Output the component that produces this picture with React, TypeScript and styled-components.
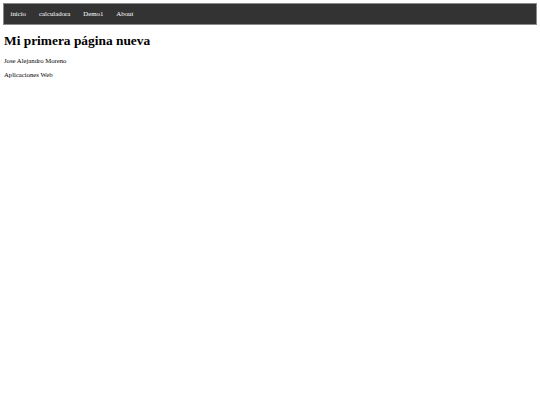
import React from "react";
import styled, { createGlobalStyle } from "styled-components";

const GlobalStyle = createGlobalStyle`
  html, body {
    margin: 0;
    background: #ffffff;
  }
  body {
    padding: 3px 4px;
    font-family: "Liberation Serif", "Times New Roman", serif;
    font-size: 6.7px;
    color: #000000;
  }
`;

const NavBar = styled.ul`
  list-style: none;
  margin: 0 -1px;
  padding: 0;
  display: flex;
  background-color: #333333;
  border: 1px solid #8a8a8a;
`;

const NavItem = styled.li`
  display: block;
`;

const NavLink = styled.a`
  display: block;
  color: #ffffff;
  text-decoration: none;
  padding: 6px 6.5px;
  font-size: 6.8px;
  line-height: 8px;
`;

const Title = styled.h1`
  font-size: 13.4px;
  margin: 8px 0 8px;
`;

const Text = styled.p`
  margin: 7px 0;
`;

const links = ["inicio", "calculadora", "Demo1", "About"];

const App: React.FC = () => {
  return (
    <>
      <GlobalStyle />
      <NavBar>
        {links.map((name) => (
          <NavItem key={name}>
            <NavLink href="#">{name}</NavLink>
          </NavItem>
        ))}
      </NavBar>
      <Title>Mi primera página nueva</Title>
      <Text>Jose Alejandro Moreno</Text>
      <Text>Aplicaciones Web</Text>
    </>
  );
};

export default App;
